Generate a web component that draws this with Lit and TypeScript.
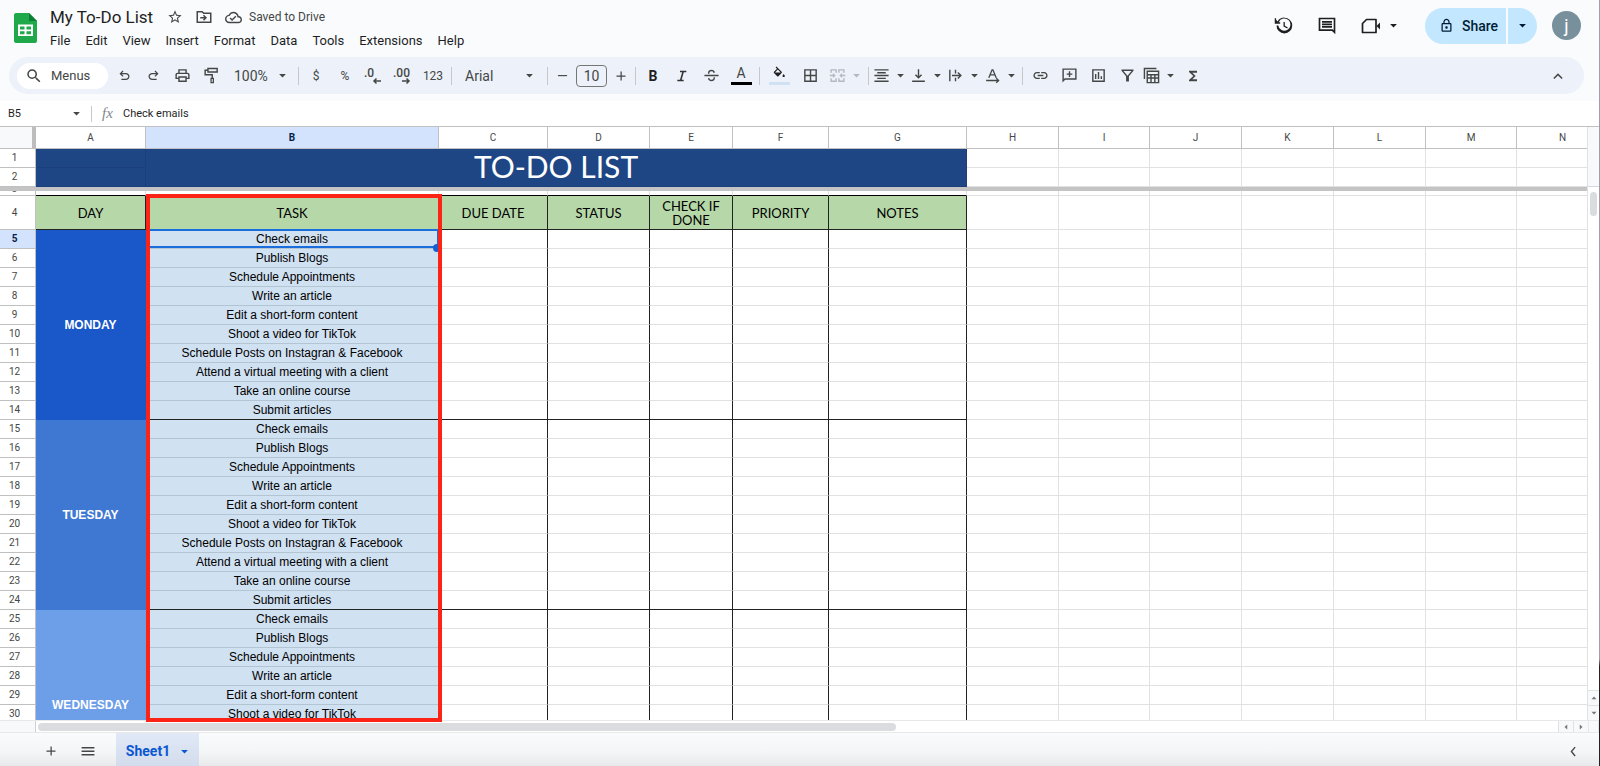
import { LitElement, html, svg, css, nothing } from "lit";
import { customElement, property } from "lit/decorators.js";
import { classMap } from "lit/directives/class-map.js";

const ICONS: Record<string, unknown> = {
  star: svg`<path d="M22 9.240l-7.190-.62L12 2 9.190 8.630 2 9.240l5.460 4.730L5.820 21 12 17.270 18.180 21l-1.630-7.030L22 9.240zM12 15.400l-3.760 2.270 1-4.280-3.320-2.880 4.380-.38L12 6.100l1.710 4.040 4.380.38-3.320 2.880 1 4.280L12 15.400z"/>`,
  move: svg`<path fill-rule="evenodd" d="M2 4h8l2 2h10v14H2zM4 6v12h16V8h-8.800l-2-2zM7 12h5.200l-1.600-1.600L12 9l4 4-4 4-1.400-1.400L12.200 14H7z"/>`,
  cloud: svg`<path d="M19.350 10.040C18.670 6.590 15.640 4 12 4 9.110 4 6.600 5.640 5.350 8.040 2.340 8.360 0 10.910 0 14c0 3.310 2.690 6 6 6h13c2.760 0 5-2.240 5-5 0-2.640-2.050-4.780-4.650-4.960zM19 18H6c-2.210 0-4-1.790-4-4 0-2.050 1.530-3.760 3.560-3.970l1.070-.11.5-.95C8.080 7.140 9.940 6 12 6c2.620 0 4.880 1.860 5.390 4.430l.3 1.500 1.530.11c1.560.1 2.780 1.410 2.780 2.960 0 1.650-1.350 3-3 3zm-9-3.820l-2.090-2.090L6.500 13.500 10 17l6.010-6.010-1.410-1.410z"/>`,
  search: svg`<path d="M15.500 14h-.79l-.28-.27A6.470 6.470 0 0 0 16 9.500 6.500 6.500 0 1 0 9.500 16c1.610 0 3.090-.59 4.230-1.570l.27.28v.79l5 4.990L20.490 19l-4.990-5zm-6 0C7.010 14 5 11.990 5 9.500S7.010 5 9.500 5 14 7.010 14 9.500 11.990 14 9.500 14z"/>`,
  undo: svg`<path d="M7 19v-2h7.100q1.580 0 2.740-1T18 13.500 16.840 11 14.100 10H7.800l2.600 2.600L9 14 4 9l5-5 1.400 1.400L7.800 8h6.300q2.420 0 4.160 1.580T20 13.500t-1.740 3.930T14.100 19H7z"/>`,
  redo: svg`<path d="M9.900 19q-2.420 0-4.160-1.570T4 13.500t1.740-3.920T9.900 8h6.300l-2.600-2.600L15 4l5 5-5 5-1.400-1.400 2.600-2.600H9.900q-1.580 0-2.740 1T6 13.500 7.160 16t2.740 1H17v2H9.900z"/>`,
  print: svg`<path d="M19 8h-1V3H6v5H5c-1.660 0-3 1.340-3 3v6h4v4h12v-4h4v-6c0-1.660-1.340-3-3-3zM8 5h8v3H8V5zm8 12v2H8v-4h8v2zm2-2v-2H6v2H4v-4c0-.55.45-1 1-1h14c.55 0 1 .45 1 1v4h-2z"/>`,
  paint: svg`<path fill-rule="evenodd" d="M6 1h15v7H6V5.500H4V10h10v5h1.500v8h-5v-8H12v-3H2V3.500h4zM8 3v3h11V3zM12.300 17v4h1.400v-4z"/>`,
  strike: svg`<path d="M2 11h20v2H2zM7 9.500C6.500 6 8.800 4 12 4c2.600 0 4.400 1.300 4.900 3.600l-2 .7C14.500 6.800 13.600 6 12 6c-2 0-3.200 1-3 3.500zM16.900 14.500c.3 3.500-1.900 5.500-5 5.500-2.800 0-4.700-1.500-5-4l2-.6c.2 1.700 1.300 2.600 3 2.600 2 0 3.200-1 3-3.500z"/>`,
  borders: svg`<path d="M3 3v18h18V3H3zm8 16H5v-6h6v6zm0-8H5V5h6v6zm8 8h-6v-6h6v6zm0-8h-6V5h6v6z"/>`,
  merge: svg`<path d="M2 3h7v2H4v3H2zM15 3h7v5h-2V5h-5zM2 16h2v3h5v2H2zM20 16h2v5h-7v-2h5zM1 11h4.500V8.500L9.500 12l-4 3.500V13H1zM23 11h-4.500V8.500l-4 3.500 4 3.500V13H23zM9 3h2v5H9zM13 3h2v5h-2zM9 16h2v5H9zM13 16h2v5h-2z"/>`,
  center: svg`<path d="M6 15v2h12v-2H6zm-4 4v2h20v-2H2zM2 11v2h20v-2H2zm4-4v2h12V7H6zM2 3v2h20V3H2z"/>`,
  bottom: svg`<path d="M17 11.500l-1.400-1.400L13 12.700V3h-2v9.700l-2.600-2.600L7 11.500l5 5zM3 19v2h18v-2z"/>`,
  wrap: svg`<path d="M3 4h2v16H3zM11 4h2v5h-2zM11 15h2v5h-2zM7 11h10.200l-2.600-2.600L16 7l5 5-5 5-1.400-1.400 2.600-2.600H7z"/>`,
  rotate: svg`<path d="M10.800 3h2.400l5 12h-2.200l-1.100-2.900H9.100L8 15H5.800zM9.800 10.300h4.400L12 4.900zM3 18h15.200l-1.600-1.600L18 15l4 4-4 4-1.400-1.400L18.200 20H3z"/>`,
  link: svg`<path d="M3.900 12c0-1.710 1.390-3.100 3.100-3.100h4V7H7c-2.760 0-5 2.240-5 5s2.240 5 5 5h4v-1.900H7c-1.710 0-3.100-1.390-3.100-3.100zM8 13h8v-2H8v2zm9-6h-4v1.900h4c1.710 0 3.100 1.390 3.100 3.100s-1.390 3.100-3.100 3.100h-4V17h4c2.760 0 5-2.240 5-5s-2.240-5-5-5z"/>`,
  addComment: svg`<path d="M2 2h20v16H6l-4 4zM4 4v13.200L5.200 16H20V4zM11 6h2v3h3v2h-3v3h-2v-3H8V9h3z"/>`,
  chart: svg`<path d="M3 3h18v18H3zM5 5v14h14V5zM7 10h2v7H7zM11 7h2v10h-2zM15 13h2v4h-2z"/>`,
  filter: svg`<path d="M3.500 3.500h17v1.700L14 13v7.500h-4V13L3.500 5.200zM6.300 5.500L12 12.400l5.700-6.900z"/>`,
  views: svg`<path fill-rule="evenodd" d="M1 1h18v2H3v14H1zM5 5h18v18H5zM7 7v3h14V7zM7 12v2.500h3.300V12zM12.300 12v2.500h3.400V12zM17.700 12v2.500H21V12zM7 16.500V21h3.300v-4.500zM12.300 16.500V21h3.400v-4.500zM17.700 16.500V21H21v-4.500z"/>`,
  sigma: svg`<path d="M18 4H6v2l6.500 6L6 18v2h12v-3h-7l5-5-5-5h7z"/>`,
  history: svg`<path d="M13.500 8H12v5l4.280 2.540.72-1.210-3.500-2.080V8zM13 3a9 9 0 0 0-7.700 4.300L3.500 5.500V3.700H2v6.200h6.200V8.200H6.500A7 7 0 1 1 6 12H4a9 9 0 1 0 9-9z"/>`,
  comments: svg`<path d="M2 2h20v20l-4-4H2zM4 4v12h14.800L20 17.200V4zM6 6h12v2H6zM6 9h12v2H6zM6 12h12v2H6z"/>`,
  lock: svg`<path d="M18 8h-1V6c0-2.760-2.240-5-5-5S7 3.240 7 6v2H6c-1.100 0-2 .9-2 2v10c0 1.100.9 2 2 2h12c1.100 0 2-.9 2-2V10c0-1.100-.9-2-2-2zM9 6c0-1.660 1.340-3 3-3s3 1.340 3 3v2H9V6zm9 14H6V10h12v10zm-6-3c1.100 0 2-.9 2-2s-.9-2-2-2-2 .9-2 2 .9 2 2 2z"/>`,
  caret: svg`<path d="M3 8h18l-9 9z"/>`,
  plus: svg`<path d="M11 3h2.500v8H21v2.500h-7.500V21H11v-7.500H3V11h8z"/>`,
  minus: svg`<path d="M2 11h20v2.500H2z"/>`,
  menu: svg`<path d="M1 5h22v2.500H1zM1 11h22v2.500H1zM1 17h22v2.500H1z"/>`,
  up: svg`<path d="M12 8l-7 7 1.600 1.600L12 11.200l5.400 5.400L19 15z"/>`,
  left: svg`<path d="M16 4.500L14 3l-7.500 9 7.500 9 2-1.500L9.800 12z"/>`,
  triUp: svg`<path d="M2 17h20L12 6z"/>`,
  triDown: svg`<path d="M2 7h20L12 18z"/>`,
  triLeft: svg`<path d="M17 2v20L6 12z"/>`,
  triRight: svg`<path d="M7 2v20l11-10z"/>`,
};

const icon = (name: string, size = 18) =>
  html`<svg viewBox="0 0 24 24" width=${size} height=${size} fill="currentColor" aria-hidden="true">${ICONS[name]}</svg>`;

const COLUMNS: [string, number][] = [
  ["A", 110], ["B", 293], ["C", 109], ["D", 102], ["E", 83], ["F", 96], ["G", 138],
  ["H", 92], ["I", 91], ["J", 92], ["K", 92], ["L", 92], ["M", 91], ["N", 92],
];
const OUTER = COLUMNS.slice(7);
const HEADINGS = ["DAY", "TASK", "DUE DATE", "STATUS", "CHECK IF DONE", "PRIORITY", "NOTES"];
const DAYS = ["MONDAY", "TUESDAY", "WEDNESDAY"];
const TASKS = [
  "Check emails", "Publish Blogs", "Schedule Appointments", "Write an article",
  "Edit a short-form content", "Shoot a video for TikTok",
  "Schedule Posts on Instagran & Facebook", "Attend a virtual meeting with a client",
  "Take an online course", "Submit articles",
];

const controls = css`
  :host, * { box-sizing: border-box; }
  button, input, select { font: inherit; color: inherit; border: 0; padding: 0; margin: 0; background: none; outline: 0; }
  button { display: inline-flex; align-items: center; justify-content: center; cursor: pointer; }
  svg { display: block; flex: none; }
`;

@customElement("doc-header")
export class DocHeader extends LitElement {
  static styles = [controls, css`
    :host { display: flex; justify-content: space-between; height: 57px; padding: 5px 18px 0 14px; color: #1f1f1f; }
    .left { display: flex; gap: 13px; }
    .logo { margin-top: 8px; }
    .row { display: flex; align-items: center; height: 24px; color: #444746; }
    .name { width: 104px; height: 24px; margin-right: 13px; font-size: 17px; color: #1f1f1f; }
    .row button { margin-right: 12px; }
    .saved { font-size: 12px; margin-left: -5px; }
    nav { display: flex; gap: 15px; height: 22px; font-size: 13px; }
    .right { display: flex; align-items: center; height: 41px; }
    .history { width: 44px; }
    .comments { width: 44px; }
    .meet { width: 60px; gap: 8px; margin-right: 16px; }
    .share { display: flex; gap: 2px; height: 36px; margin-right: 15px; color: #001d35; font-size: 14px; font-weight: 500; }
    .main { width: 81px; gap: 8px; padding-left: 6px; background: #c2e7ff; border-radius: 18px 0 0 18px; }
    .more { width: 29px; background: #c2e7ff; border-radius: 0 18px 18px 0; }
    .avatar { width: 29px; height: 29px; border-radius: 50%; background: #78909c; color: #fff; font-size: 18px; }
  `];

  render() {
    return html`
      <div class="left">
        <svg class="logo" viewBox="0 0 23 30" width="23" height="30" role="img" aria-label="Sheets">
          <path fill="#1fa94b" d="M2 0h13l8 8v20a2 2 0 0 1-2 2H2a2 2 0 0 1-2-2V2a2 2 0 0 1 2-2z" />
          <path fill="#0c7f35" d="M15 0l8 8h-8z" />
          <path fill="#fff" fill-rule="evenodd" d="M4 11.500h15V23H4zM6 13.500v3h4.500v-3zM12.500 13.500v3H17v-3zM6 18.300v2.900h4.500v-2.900zM12.500 18.300v2.900H17v-2.900z" />
        </svg>
        <div>
          <div class="row">
            <input class="name" aria-label="Document name" value="My To-Do List" />
            <button aria-label="Star">${icon("star", 16)}</button>
            <button aria-label="Move">${icon("move", 18)}</button>
            <button aria-label="Drive status">${icon("cloud", 17)}</button>
            <span class="saved">Saved to Drive</span>
          </div>
          <nav>
            ${["File", "Edit", "View", "Insert", "Format", "Data", "Tools", "Extensions", "Help"].map((m) => html`<button>${m}</button>`)}
          </nav>
        </div>
      </div>
      <div class="right">
        <button class="history" aria-label="Version history">${icon("history", 21)}</button>
        <button class="comments" aria-label="Comments">${icon("comments", 20)}</button>
        <button class="meet" aria-label="Meet">
          <svg viewBox="0 0 20 16" width="20" height="16" aria-hidden="true">
            <path fill="none" stroke="currentColor" stroke-width="1.700" stroke-linejoin="round" d="M5.500 1.500H15v13H1.500v-9z" />
            <path fill="currentColor" d="M15.500 8L19 4.500v7z" />
          </svg>
          ${icon("caret", 9)}
        </button>
        <div class="share">
          <button class="main">${icon("lock", 15)}Share</button>
          <button class="more" aria-label="Share options">${icon("caret", 9)}</button>
        </div>
        <button class="avatar" aria-label="Account">j</button>
      </div>
    `;
  }
}

@customElement("tool-bar")
export class ToolBar extends LitElement {
  static styles = [controls, css`
    :host { display: flex; align-items: center; gap: 3px; height: 37px; margin: 0 15px 7px 9px; padding: 0 13px 0 8px; border-radius: 19px; background: #edf2fa; color: #444746; font-size: 14px; }
    .search { display: flex; align-items: center; gap: 8px; width: 91px; height: 26px; padding-left: 8px; border-radius: 13px; background: #fff; font-size: 13px; }
    .search input { width: 50px; }
    .search input::placeholder { color: #444746; opacity: 1; }
    .tool { width: 26px; height: 26px; }
    .wide { width: 28px; }
    .fill { width: 30px; }
    .step { width: 21px; }
    .small { font-size: 12px; }
    .drop { width: 34px; height: 26px; justify-content: space-between; }
    .off { width: 38px; padding: 0 1px 0 3px; color: #b4b8bf; }
    .drop svg:last-child { margin-right: 2px; }
    .sep { width: 1px; height: 18px; margin: 0 1px; background: #c7c7c7; }
    .pick { display: grid; align-items: center; height: 26px; }
    .pick > * { grid-area: 1 / 1; }
    .pick select { appearance: none; width: 100%; height: 26px; }
    .pick svg { justify-self: end; margin-right: 9px; pointer-events: none; }
    .zoom { width: 64px; margin-left: 3px; }
    .zoom select { padding-left: 4px; }
    .zoom svg { margin-right: 7px; }
    .font { width: 87px; }
    .font select { padding-left: 9px; }
    .size { width: 31px; height: 22px; border: 1px solid #747775; border-radius: 4px; text-align: center; }
    .bar { display: grid; justify-items: center; align-content: center; gap: 2px; font-size: 14px; line-height: 14px; }
    .line { width: 21px; height: 3px; background: #000; }
    .pale { background: #cfe2f3; }
    .b { font-weight: 700; font-size: 14px; color: #1f1f1f; }
    .grow { flex: 1; }
  `];

  private tool(name: string, size = 17) {
    return html`<button class="tool" aria-label=${name}>${icon(name, size)}</button>`;
  }
  private drop(name: string, off = false) {
    return html`<button class=${classMap({ drop: true, off })} aria-label=${name}>${icon(name, 17)}${icon("caret", 9)}</button>`;
  }

  render() {
    const sep = html`<span class="sep"></span>`;
    const decimals = (label: string, arrow: string) => html`
      <svg viewBox="0 0 20 18" width="20" height="18" aria-hidden="true">
        <text x="0" y="10" font-size="12" font-weight="500" fill="currentColor">${label}</text>
        <path d=${arrow} fill="none" stroke="currentColor" stroke-width="1.500" />
      </svg>`;
    return html`
      <label class="search">${icon("search", 18)}<input aria-label="Search the menus" placeholder="Menus" /></label>
      ${["undo", "redo", "print", "paint"].map((n) => this.tool(n, n === "print" || n === "paint" ? 17 : 15))}
      <div class="pick zoom"><select aria-label="Zoom"><option>100%</option></select>${icon("caret", 9)}</div>
      ${sep}
      <button class="tool small">$</button>
      <button class="tool small">%</button>
      <button class="tool" aria-label="Decrease decimal places">${decimals(".0", "M17 14h-7M12.500 11.500L10 14l2.500 2.500")}</button>
      <button class="tool" aria-label="Increase decimal places">${decimals(".00", "M9 14h7M13.500 11.500L16 14l-2.500 2.500")}</button>
      <button class="tool small wide">123</button>
      ${sep}
      <div class="pick font"><select aria-label="Font"><option>Arial</option></select>${icon("caret", 9)}</div>
      ${sep}
      <button class="tool step" aria-label="Decrease font size">${icon("minus", 11)}</button>
      <input class="size" aria-label="Font size" value="10" />
      <button class="tool step" aria-label="Increase font size">${icon("plus", 12)}</button>
      ${sep}
      <button class="tool b">B</button>
      <button class="tool" aria-label="Italic">
        <svg viewBox="0 0 24 24" width="16" height="16"><path fill="#333" d="M9 4v2.400h3.200L9 17.600H5V20h9.500v-2.400h-3l3.200-11.200h3.800V4z" /></svg>
      </button>
      ${this.tool("strike")}
      <button class="tool wide bar" aria-label="Text colour"><span>A</span><span class="line"></span></button>
      ${sep}
      <button class="tool fill bar" aria-label="Fill colour">
        <svg viewBox="0 0 24 24" width="18" height="14"><path fill="#1f1f1f" d="M16.560 9.940L7.620 1 6.210 2.410l2.380 2.380-5.150 5.150a1.490 1.490 0 0 0 0 2.120l5.500 5.500c.29.29.68.44 1.060.44s.77-.15 1.060-.44l5.500-5.500c.59-.58.59-1.530 0-2.120zM5.210 11L10 6.210 14.790 11zM20 13.500s-2 2.170-2 3.500a2 2 0 0 0 4 0c0-1.330-2-3.500-2-3.500z" /></svg>
        <span class="line pale"></span>
      </button>
      ${this.tool("borders")}
      ${this.drop("merge", true)}
      ${sep}
      ${["center", "bottom", "wrap", "rotate"].map((n) => this.drop(n))}
      ${sep}
      ${this.tool("link")}${this.tool("addComment")}${this.tool("chart")}${this.tool("filter")}
      ${this.drop("views")}
      ${this.tool("sigma", 16)}
      <span class="grow"></span>
      ${this.tool("up", 16)}
    `;
  }
}

@customElement("formula-bar")
export class FormulaBar extends LitElement {
  static styles = [controls, css`
    :host { display: flex; align-items: center; height: 25px; padding-left: 8px; background: #fff; color: #1f1f1f; font-size: 11px; }
    .cell { width: 62px; }
    .caret { width: 12px; color: #444746; }
    .sep { width: 1px; height: 16px; margin: 0 10px 0 9px; background: #c7c7c7; }
    .fx { width: 21px; font: italic 15px "Liberation Serif", serif; color: #80868b; }
    .value { flex: 1; }
  `];

  render() {
    return html`
      <input class="cell" aria-label="Name box" value="B5" />
      <button class="caret" aria-label="Named ranges">${icon("caret", 9)}</button>
      <span class="sep"></span>
      <label class="fx" for="formula">fx</label>
      <input class="value" id="formula" value="Check emails" />
    `;
  }
}

@customElement("sheet-grid")
export class SheetGrid extends LitElement {
  @property({ type: Number }) active = 5;

  static styles = [controls, css`
    :host { position: relative; display: grid; grid-template: minmax(0, 1fr) 13px / minmax(0, 1fr) 11px; flex: 1; min-height: 0; border-top: 1px solid #c0c0c0; background: #fff; }
    .view { overflow: hidden; border-right: 1px solid #e1e1e1; }
    table { table-layout: fixed; width: 0; border-collapse: separate; border-spacing: 0; }
    .heads { width: 36px; }
    th, td { padding: 0; border: 0 solid #e1e1e1; border-width: 0 1px 1px 0; overflow: hidden; text-align: center; font: 12px/16px "Liberation Sans", Arial, sans-serif; color: #000; }
    th { border-color: #c0c0c0; font: 10px/12px Roboto, sans-serif; color: #444746; }
    .letters { height: 22px; }
    .corner { background: #f8f9fa; border-right: 4px solid #bdbdbd; }
    .num { padding-right: 6px; }
    .on { background: #d3e3fd; color: #041e49; font-weight: 700; }
    .top { height: 19px; }
    .line { height: 19px; }
    .banner { background: #1f4684; border-color: #1a3f7c; color: #fff; }
    .title { padding-bottom: 3px; font: 30px/34px Lato, sans-serif; }
    .freeze td { height: 4px; background: #c4c4c4; border: 0; }
    .third { height: 5px; }
    .third td { border-bottom-color: #000; }
    .third .out { border-bottom-color: #e1e1e1; }
    .stub { display: flex; align-items: flex-end; justify-content: center; height: 4px; overflow: hidden; }
    .head { height: 34px; }
    .label { padding: 0 8px; background: #b6d7a8; border-color: #222; font: 13px/14px Lato, sans-serif; }
    .day { color: #fff; font-weight: 700; }
    .d0 { background: #1a57c9; border-color: #1a57c9; }
    .d1 { background: #3f78d3; border-color: #3f78d3; }
    .d2 { background: #6d9ee8; border-color: #6d9ee8; }
    .task { background: #d0e1f2; border-color: #b3c4d3; }
    .ruled { border-right-color: #222; }
    .last { border-bottom-color: #222; }
    .active { position: relative; overflow: visible; }
    .ring { position: absolute; inset: -1px 0 0 0; border: 2px solid #1a6ddb; border-right-width: 1px; }
    .knob { position: absolute; right: -3px; bottom: -4px; width: 8px; height: 8px; border-radius: 50%; background: #1a5fd0; }
    .mark { position: absolute; left: 146px; top: 67px; width: 296px; bottom: 11px; border: 4px solid #fc2417; pointer-events: none; }
    .vbar { display: flex; flex-direction: column; background: #fff; }
    .vtop { height: 60px; background: #f8f9fa; border-bottom: 1px solid #d3d8e2; }
    .vthumb { width: 7px; height: 24px; margin: 5px 2px 0; border-radius: 4px; background: #dadce0; }
    .space { flex: 1; }
    .step { width: 100%; height: 15px; background: #f8f9fa; border-top: 1px solid #e1e1e1; color: #777; }
    .hbar { display: flex; align-items: center; border-top: 1px solid #e8e8e8; border-bottom: 1px solid #e8e8e8; }
    .hpad { width: 36px; height: 100%; background: #f8f9fa; border-right: 1px solid #d0d0d0; }
    .hthumb { width: 54%; height: 8px; margin-left: 2px; border-radius: 4px; background: #dadce0; }
    .side { width: 15px; height: 100%; background: #f8f9fa; border-left: 1px solid #e1e1e1; color: #777; }
    .end { background: #f8f9fa; border: 1px solid #e8e8e8; }
  `];

  private outer() {
    return OUTER.map(() => html`<td class="out"></td>`);
  }

  private line(i: number) {
    const n = i + 5;
    const t = i % 10;
    const d = Math.floor(i / 10);
    const on = n === this.active;
    const last = t === 9;
    return html`<tr class="line">
      <th scope="row" class=${classMap({ num: true, on })}>${n}</th>
      ${t === 0 ? html`<td rowspan="10" class="day d${d}">${DAYS[d]}</td>` : nothing}
      <td class=${classMap({ task: true, last, active: on })}>${TASKS[t]}${on ? html`<span class="ring"></span><span class="knob"></span>` : nothing}</td>
      ${HEADINGS.slice(2).map(() => html`<td class=${classMap({ ruled: true, last })}></td>`)}
      ${this.outer()}
    </tr>`;
  }

  render() {
    return html`
      <div class="view">
        <table>
          <colgroup><col class="heads" />${COLUMNS.map(([, w]) => html`<col style="width:${w}px" />`)}</colgroup>
          <tr class="letters">
            <th class="corner"></th>
            ${COLUMNS.map(([c]) => html`<th scope="col" class=${classMap({ on: c === "B" })}>${c}</th>`)}
          </tr>
          <tr class="top"><th scope="row" class="num">1</th><td class="banner"></td><td class="banner title" colspan="6" rowspan="2">TO-DO LIST</td>${this.outer()}</tr>
          <tr class="top"><th scope="row" class="num">2</th><td class="banner"></td>${this.outer()}</tr>
          <tr class="freeze"><td colspan="15"></td></tr>
          <tr class="third"><th scope="row" class="num"><div class="stub">3</div></th>${HEADINGS.map(() => html`<td></td>`)}${this.outer()}</tr>
          <tr class="head"><th scope="row" class="num">4</th>${HEADINGS.map((h) => html`<td class="label">${h}</td>`)}${this.outer()}</tr>
          ${Array.from({ length: 30 }, (_, i) => this.line(i))}
        </table>
      </div>
      <div class="vbar">
        <div class="vtop"></div><div class="vthumb"></div><div class="space"></div>
        <button class="step" aria-label="Scroll up">${icon("triUp", 6)}</button>
        <button class="step" aria-label="Scroll down">${icon("triDown", 6)}</button>
      </div>
      <div class="hbar">
        <div class="hpad"></div><div class="hthumb"></div><div class="space"></div>
        <button class="side" aria-label="Scroll left">${icon("triLeft", 6)}</button>
        <button class="side" aria-label="Scroll right">${icon("triRight", 6)}</button>
      </div>
      <div class="end"></div>
      <div class="mark"></div>
    `;
  }
}

@customElement("sheet-tabs")
export class SheetTabs extends LitElement {
  static styles = [controls, css`
    :host { display: flex; height: 33px; padding: 0 16px 0 38px; background: linear-gradient(#f9fbfd, #f4f5f7 60%, #e8e9ea); color: #444746; }
    .tool { width: 25px; margin-top: 3px; }
    .list { margin: 3px 16px 0 12px; }
    .tab { gap: 10px; width: 83px; padding-top: 3px; background: linear-gradient(#e1e9f7, #d3dcec); color: #0b57d0; font-size: 14px; font-weight: 700; }
    .grow { flex: 1; }
    .fold { width: 20px; margin-top: 3px; }
  `];

  render() {
    return html`
      <button class="tool" aria-label="Add sheet">${icon("plus", 12)}</button>
      <button class="tool list" aria-label="All sheets">${icon("menu", 14)}</button>
      <button class="tab">Sheet1${icon("caret", 9)}</button>
      <span class="grow"></span>
      <button class="fold" aria-label="Show side panel">${icon("left", 13)}</button>
    `;
  }
}

@customElement("app-root")
export class AppRoot extends LitElement {
  static styles = css`
    :host { display: flex; height: 100vh; overflow: hidden; font-family: Roboto, "Liberation Sans", sans-serif; background: #f9fbfd; }
    .page { display: flex; flex-direction: column; flex: 1; min-width: 0; }
    .edge { width: 1px; background: linear-gradient(#a19daa 86%, #222 87%); }
  `;

  render() {
    return html`
      <div class="page">
        <doc-header></doc-header>
        <tool-bar></tool-bar>
        <formula-bar></formula-bar>
        <sheet-grid></sheet-grid>
        <sheet-tabs></sheet-tabs>
      </div>
      <div class="edge"></div>
    `;
  }
}
